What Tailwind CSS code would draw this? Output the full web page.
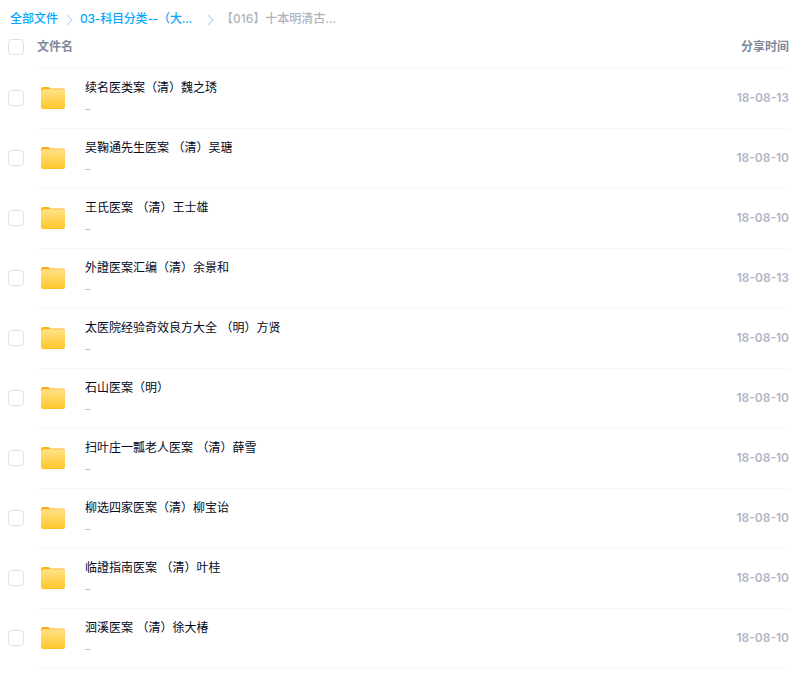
<!DOCTYPE html>
<html lang="zh">
<head>
  <meta charset="UTF-8" />
  <title>文件列表</title>
  <script src="https://cdn.jsdelivr.net/npm/@tailwindcss/browser@4"></script>
</head>
<body class="bg-white font-['Inter','Noto_Sans_CJK_SC',sans-serif] text-xs overflow-hidden">
  <svg class="absolute w-0 h-0">
    <defs>
      <linearGradient id="folderFill" x1="0" y1="0" x2="0" y2="1">
        <stop offset="0" stop-color="#ffe285" />
        <stop offset="1" stop-color="#ffc62e" />
      </linearGradient>
    </defs>
  </svg>

  <!-- breadcrumb -->
  <div class="flex items-center h-[38px] pl-[10px] font-medium">
    <span class="text-[#06a7ff] w-[49px]">全部文件</span>
    <svg class="w-[8px] h-[12px] ml-[7px] mt-[2px]" viewBox="0 0 8 12" fill="none" stroke="#c4d8f4" stroke-width="1.2"><path d="M1 1l5 5-5 5"/></svg>
    <span class="text-[#06a7ff] ml-[6px] w-[127px] tracking-[-0.2px]">03-科目分类--（大...</span>
    <svg class="w-[8px] h-[12px] mt-[2px]" viewBox="0 0 8 12" fill="none" stroke="#c4d8f4" stroke-width="1.2"><path d="M1 1l5 5-5 5"/></svg>
    <span class="text-[#afb3bf] ml-[6px]">【016】十本明清古...</span>
  </div>

  <!-- header -->
  <div class="flex items-start h-[30px] pl-[8px] pr-[11px]">
    <span class="w-[16px] h-[16px] rounded-[4px] border border-[#dfe1ea] bg-white mt-[1px]"></span>
    <div class="flex items-center flex-1 h-full ml-[13px] pb-[11px] border-b border-[#f6f7f9]">
      <span class="font-bold text-[#818999]">文件名</span>
      <span class="ml-auto font-bold text-[#818999]">分享时间</span>
    </div>
  </div>

  <!-- list -->
  <div id="list" class="pt-[1px] pl-[8px] pr-[11px]"></div>

  <script>
    const files = [
      ['续名医类案（清）魏之琇', '18-08-13'],
      ['吴鞠通先生医案 （清）吴瑭', '18-08-10'],
      ['王氏医案 （清）王士雄', '18-08-10'],
      ['外證医案汇编（清）余景和', '18-08-13'],
      ['太医院经验奇效良方大全 （明）方贤', '18-08-10'],
      ['石山医案（明）', '18-08-10'],
      ['扫叶庄一瓢老人医案 （清）薛雪', '18-08-10'],
      ['柳选四家医案（清）柳宝诒', '18-08-10'],
      ['临證指南医案 （清）叶桂', '18-08-10'],
      ['洄溪医案 （清）徐大椿', '18-08-10']
    ];
    document.getElementById('list').innerHTML = files.map(([name, date]) => `
      <div class="flex items-center h-[60px]">
        <span class="w-[16px] h-[16px] rounded-[4px] border border-[#dfe1ea] mb-[2px]"></span>
        <div class="flex items-center flex-1 h-full ml-[13px] border-b border-[#f6f7f9]">
          <svg class="ml-[4px] mb-[1px] w-[24px] h-[22px]" viewBox="0 0 24 22">
            <path d="M0 2.500A2.500 2.500 0 0 1 2.500 0H7c1.200 0 1.600.8 2.400 1.400H21.500A2.500 2.500 0 0 1 24 3.900V8H0z" fill="#ffaf0f"/>
            <rect y="2.200" width="24" height="19.800" rx="2.500" fill="url(#folderFill)"/>
            <path d="M0 19.500V20a2 2 0 0 0 2 2h20a2 2 0 0 0 2-2v-.5a2 2 0 0 1-2 2H2a2 2 0 0 1-2-2z" fill="#ffb81c"/>
          </svg>
          <div class="ml-[20px] flex flex-col">
            <span class="text-[#03081a] leading-[20px]">${name}</span>
            <span class="text-[#afb3bf] leading-[20px] mt-[1px]">-</span>
          </div>
          <span class="ml-auto font-semibold text-[#b0b5c8] mb-[2px]">${date}</span>
        </div>
      </div>`).join('');
  </script>
</body>
</html>
